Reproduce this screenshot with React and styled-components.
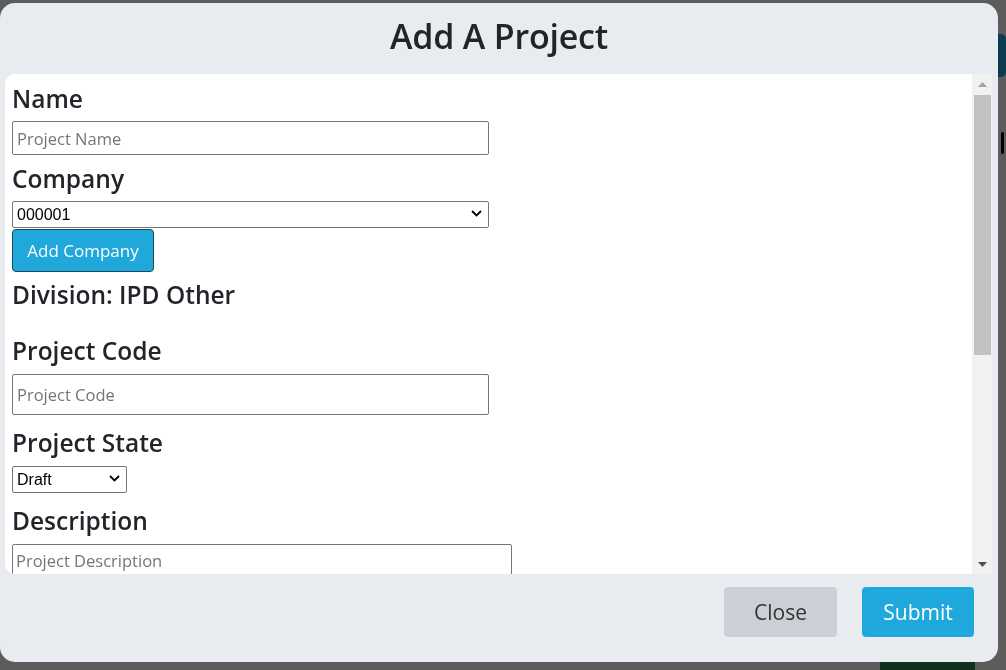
import React, { useState } from "react";
import styled, { createGlobalStyle } from "styled-components";

const GlobalStyle = createGlobalStyle`
    html, body {
        margin: 0;
        padding: 0;
        height: 100%;
        overflow: hidden;
    }
    body {
        font-family: "Open Sans", "Noto Sans", sans-serif;
        color: #212529;
        background: #ffffff;
    }
`;

const Page = styled.div`
    height: 100vh;
    display: flex;
    flex-direction: column;
    justify-content: space-between;
    padding-top: 34px;
    box-sizing: border-box;
    overflow: hidden;
`;

const PageTop = styled.div`
    display: flex;
    flex-direction: column;
    align-items: flex-end;
    gap: 55px;
`;

const PageButton = styled.div`
    width: ${(p) => p.$width}px;
    height: ${(p) => p.$height}px;
    border-radius: 5px;
    background: ${(p) => p.$color};
    margin-right: ${(p) => p.$right}px;
`;

const PageBottom = styled.div`
    display: flex;
    justify-content: flex-end;
    margin-bottom: -22px;
`;

const Overlay = styled.div`
    position: fixed;
    inset: 0;
    background: rgba(0, 0, 0, 0.64);
`;

const Modal = styled.div`
    position: fixed;
    left: 0;
    top: 3px;
    width: 998px;
    height: 659px;
    background: #e8ecf0;
    border-radius: 15px;
    display: flex;
    flex-direction: column;
    overflow: hidden;
`;

const Header = styled.div`
    height: 71px;
    flex: none;
    display: flex;
    align-items: center;
    justify-content: center;
    padding-bottom: 6px;
    box-sizing: border-box;
`;

const Title = styled.h2`
    margin: 0;
    font-size: 34px;
    font-weight: 600;
    color: #212529;
    letter-spacing: -0.2px;
`;

const Body = styled.div`
    margin: 0 6px 0 5px;
    height: 500px;
    flex: none;
    display: flex;
    background: #ffffff;
    border-radius: 10px 0 0 10px;
    overflow: hidden;
`;

const Content = styled.div`
    flex: 1;
    overflow: hidden;
`;

const Rail = styled.div`
    width: 20px;
    flex: none;
    display: flex;
    flex-direction: column;
    background: #f1f1f1;
`;

const RailArrow = styled.div`
    height: 20px;
    flex: none;
    display: flex;
    align-items: center;
    justify-content: center;
`;

const Thumb = styled.div`
    height: 260px;
    margin: 1px 1px 0 2px;
    background: #c1c1c1;
`;

const RailSpace = styled.div`
    flex: 1;
`;

const Form = styled.form`
    padding: 10px 0 0 7px;
`;

const Label = styled.label`
    display: block;
    font-size: 24.5px;
    line-height: 29px;
    font-weight: 600;
    color: #212529;
    margin: 0 0 ${(p) => p.$gap || 8}px;
`;

const Heading = styled.div`
    font-size: 24.5px;
    line-height: 29px;
    font-weight: 600;
    color: #212529;
    margin-bottom: ${(p) => p.$after}px;
`;

const TextInput = styled.input`
    display: block;
    width: ${(p) => p.$width}px;
    height: ${(p) => p.$height}px;
    box-sizing: border-box;
    border: 1px solid #767676;
    border-radius: 2px;
    padding: 0 4px;
    font-family: "Open Sans", "Noto Sans", sans-serif;
    font-size: 16.5px;
    color: #212529;
    margin: 0 0 ${(p) => p.$after}px;
    outline: none;

    &::placeholder {
        color: #757575;
    }
`;

const TextArea = styled.textarea`
    display: block;
    width: 500px;
    height: 70px;
    box-sizing: border-box;
    border: 1px solid #767676;
    border-radius: 2px;
    padding: 5px 3px;
    margin: 0;
    font-family: "Open Sans", "Noto Sans", sans-serif;
    font-size: 16.5px;
    line-height: 22px;
    resize: none;
    outline: none;

    &::placeholder {
        color: #757575;
    }
`;

const SelectWrap = styled.div`
    position: relative;
    width: ${(p) => p.$width}px;
    margin-bottom: ${(p) => p.$after}px;

    svg {
        position: absolute;
        right: 7px;
        top: 9px;
        pointer-events: none;
    }
`;

const Select = styled.select`
    display: block;
    width: 100%;
    height: 27px;
    box-sizing: border-box;
    appearance: none;
    border: 1px solid #767676;
    border-radius: 2px;
    background: #ffffff;
    font-family: "Liberation Sans", Arial, sans-serif;
    font-size: 16px;
    color: #000000;
    padding: 0 4px;
    margin: 0;
`;

const AddButton = styled.button`
    display: block;
    width: 142px;
    height: 43px;
    background: #1fa8d9;
    border: 1px solid #1a4a5c;
    border-radius: 4px;
    color: #ffffff;
    font-family: "Open Sans", "Noto Sans", sans-serif;
    font-size: 17px;
    padding: 0;
    margin: 0 0 8px;
`;

const Footer = styled.div`
    flex: 1;
    display: flex;
    justify-content: flex-end;
    align-items: flex-start;
    gap: 25px;
    padding: 13px 24px 0 0;
`;

const FooterButton = styled.button`
    width: ${(p) => p.$width}px;
    height: 50px;
    border: none;
    border-radius: 4px;
    font-family: "Open Sans", "Noto Sans", sans-serif;
    font-size: 21px;
    background: ${(p) => (p.$primary ? "#1fa8dc" : "#cbd0d6")};
    color: ${(p) => (p.$primary ? "#ffffff" : "#333333")};
    padding: 0;
`;

const Chevron = () => (
    <svg width="11" height="7" viewBox="0 0 11 7">
        <path d="M1 1l4.5 4.5L10 1" fill="none" stroke="#000" strokeWidth="1.8" />
    </svg>
);

const Triangle = ({ up, color }) => (
    <svg width="9" height="5" viewBox="0 0 9 5">
        <path d={up ? "M0 5L4.5 0L9 5Z" : "M0 0L4.5 5L9 0Z"} fill={color} />
    </svg>
);

const SelectBox = ({ width, after, children, defaultValue }) => (
    <SelectWrap $width={width} $after={after}>
        <Select defaultValue={defaultValue}>{children}</Select>
        <Chevron />
    </SelectWrap>
);

export default function App() {
    const [name, setName] = useState("");
    const [code, setCode] = useState("");
    const [description, setDescription] = useState("");

    return (
        <>
            <GlobalStyle />
            <Page>
                <PageTop>
                    <PageButton $color="#1fa8dc" $width={60} $height={43} $right={0} />
                    <PageButton $color="#000000" $width={3} $height={22} $right={2} />
                </PageTop>
                <PageBottom>
                    <PageButton $color="#2e8b4f" $width={95} $height={36} $right={31} />
                </PageBottom>
            </Page>
            <Overlay />
            <Modal>
                <Header>
                    <Title>Add A Project</Title>
                </Header>
                <Body>
                    <Content>
                        <Form onSubmit={(e) => e.preventDefault()}>
                            <Label>Name</Label>
                            <TextInput
                                type="text"
                                placeholder="Project Name"
                                $width={477}
                                $height={34}
                                $after={9}
                                value={name}
                                onChange={(e) => setName(e.target.value)}
                            />
                            <Label>Company</Label>
                            <SelectBox width={477} after={1} defaultValue="000001">
                                <option value="000001">000001</option>
                            </SelectBox>
                            <AddButton type="button">Add Company</AddButton>
                            <Heading $after={27}>Division: IPD Other</Heading>
                            <Label $gap={9}>Project Code</Label>
                            <TextInput
                                type="text"
                                placeholder="Project Code"
                                $width={477}
                                $height={41}
                                $after={13}
                                value={code}
                                onChange={(e) => setCode(e.target.value)}
                            />
                            <Label $gap={9}>Project State</Label>
                            <SelectBox width={115} after={13} defaultValue="draft">
                                <option value="draft">Draft</option>
                                <option value="active">Active</option>
                            </SelectBox>
                            <Label $gap={9}>Description</Label>
                            <TextArea
                                placeholder="Project Description"
                                value={description}
                                onChange={(e) => setDescription(e.target.value)}
                            />
                        </Form>
                    </Content>
                    <Rail>
                        <RailArrow>
                            <Triangle up color="#a3a3a3" />
                        </RailArrow>
                        <Thumb />
                        <RailSpace />
                        <RailArrow>
                            <Triangle color="#505050" />
                        </RailArrow>
                    </Rail>
                </Body>
                <Footer>
                    <FooterButton type="button" $width={113}>Close</FooterButton>
                    <FooterButton type="button" $width={112} $primary>Submit</FooterButton>
                </Footer>
            </Modal>
        </>
    );
}
